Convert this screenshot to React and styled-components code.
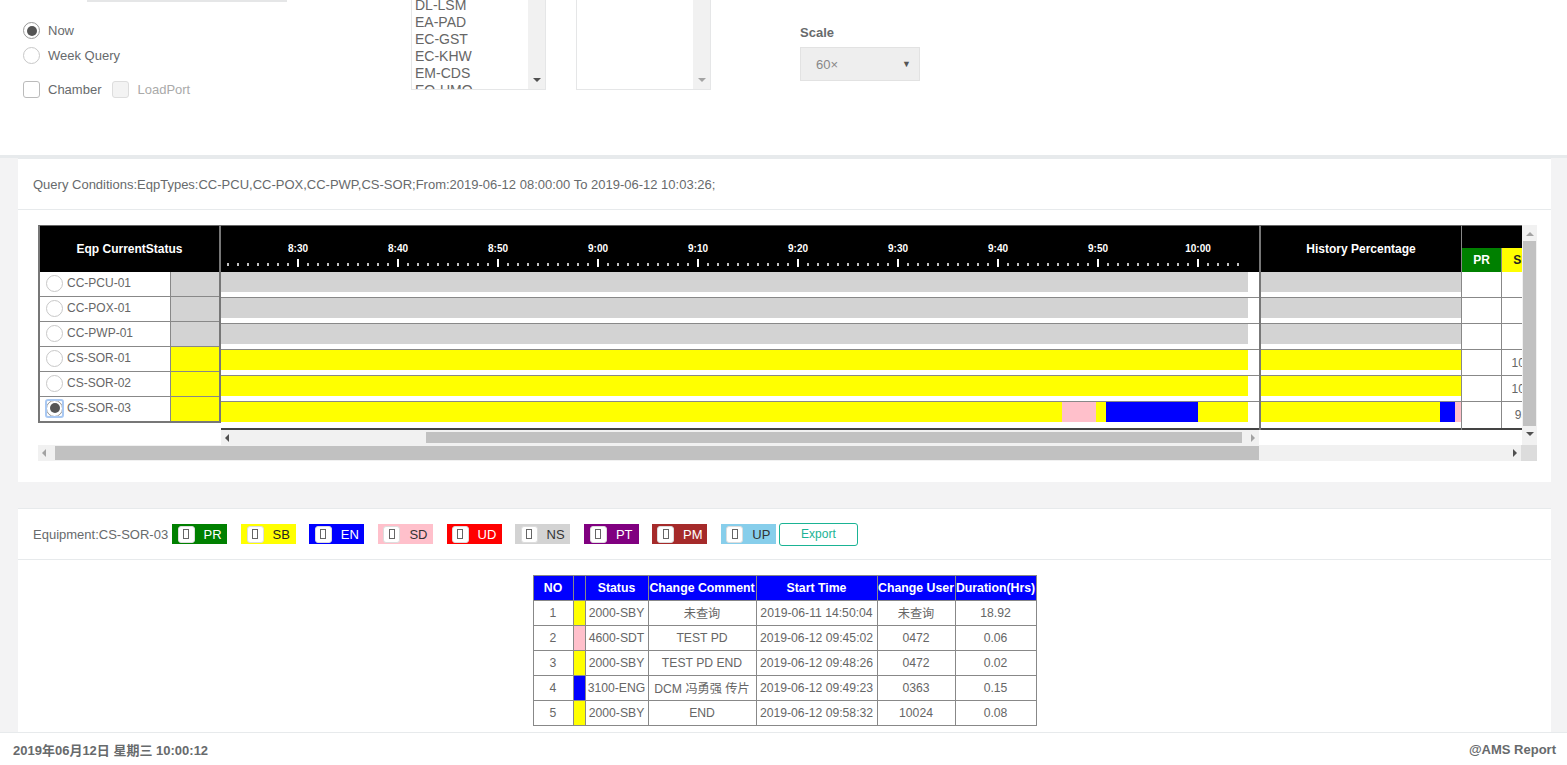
import React from 'react';
import styled, { createGlobalStyle } from 'styled-components';

const GlobalStyle = createGlobalStyle`
  html, body { margin: 0; padding: 0; }
  body {
    font-family: "Liberation Sans", Arial, "Noto Sans CJK SC", sans-serif;
    color: #676a6c;
    background: #f3f3f4;
  }
  * { box-sizing: border-box; }
`;

const Page = styled.div`
  width: 1567px;
  height: 765px;
  overflow: hidden;
  display: flex;
  flex-direction: column;
  background: #f3f3f4;
`;

/* ---------- top filter panel ---------- */

const TopPanel = styled.div`
  height: 158px;
  flex: none;
  background: #fff;
  border-bottom: 3px solid #e7eaec;
  display: flex;
  align-items: flex-start;
`;

const LeftCol = styled.div`
  width: 411px;
  flex: none;
`;

const InputStub = styled.div`
  margin-left: 87px;
  width: 200px;
  height: 2px;
  background: #e5e6e7;
`;

const OptionGroup = styled.div`
  padding-left: 23px;
  padding-top: 16px;
`;

const OptionRow = styled.label`
  display: flex;
  align-items: center;
  gap: 8px;
  height: 25px;
  font-size: 13px;
  color: ${p => (p.$disabled ? '#aaa' : '#676a6c')};
`;

const CheckRow = styled.div`
  display: flex;
  align-items: center;
  margin-top: 13px;
  height: 17px;
`;

const Radio = styled.span`
  position: relative;
  width: 17px;
  height: 17px;
  flex: none;
  border-radius: 50%;
  border: 1px solid ${p => (p.$checked ? '#999' : '#c8c8c8')};
  background: #fff;
  display: inline-flex;
  align-items: center;
  justify-content: center;

  &::before {
    content: '';
    width: 10px;
    height: 10px;
    border-radius: 50%;
    background: ${p => (p.$checked ? '#555' : 'transparent')};
  }

  ${p => p.$focus && `
    &::after {
      content: '';
      position: absolute;
      inset: -2px;
      border: 2px solid #a9c8f2;
      border-radius: 3px;
    }
  `}
`;

const Check = styled.span`
  width: 17px;
  height: 17px;
  flex: none;
  border-radius: 3px;
  border: 1px solid ${p => (p.$disabled ? '#ddd' : '#bbb')};
  background: ${p => (p.$disabled ? '#f3f3f3' : '#fff')};
`;

const CheckLabel = styled.span`
  font-size: 13px;
  margin-left: 8px;
  margin-right: 11px;
  color: ${p => (p.$disabled ? '#aaa' : '#676a6c')};
`;

const ListBox = styled.div`
  width: 135px;
  height: 90px;
  flex: none;
  margin-left: ${p => p.$ml || 0}px;
  border: 1px solid #e5e6e7;
  border-top: none;
  display: flex;
  overflow: hidden;
`;

const ListItems = styled.div`
  flex: 1;
  padding-left: 3px;
  margin-top: -3px;
`;

const ListItem = styled.div`
  font-size: 14px;
  line-height: 17px;
  color: #666;
  white-space: nowrap;
`;

const ListScroll = styled.div`
  width: 17px;
  flex: none;
  background: #f1f1f1;
  display: flex;
  flex-direction: column;
  justify-content: flex-end;
  align-items: center;
  padding-bottom: 7px;
`;

const Arrow = styled.span`
  width: 0;
  height: 0;
  border: 4px solid transparent;
  ${p => p.$dir === 'down' && `border-top-color: ${p.$light ? '#a3a3a3' : '#505050'}; border-bottom-width: 0;`}
  ${p => p.$dir === 'up' && `border-bottom-color: ${p.$light ? '#a3a3a3' : '#505050'}; border-top-width: 0;`}
  ${p => p.$dir === 'left' && `border-right-color: ${p.$light ? '#a3a3a3' : '#505050'}; border-left-width: 0;`}
  ${p => p.$dir === 'right' && `border-left-color: ${p.$light ? '#a3a3a3' : '#505050'}; border-right-width: 0;`}
`;

const ScaleCol = styled.div`
  margin-left: 89px;
  padding-top: 25px;
`;

const ScaleLabel = styled.div`
  font-size: 13px;
  font-weight: bold;
  line-height: 16px;
  color: #676a6c;
`;

const SelectBox = styled.div`
  margin-top: 6px;
  width: 120px;
  height: 34px;
  background: #eee;
  border: 1px solid #e2e2e2;
  display: flex;
  align-items: center;
  justify-content: space-between;
  padding: 0 8px 0 15px;
  font-size: 13px;
  color: #888;

  span { font-size: 9px; color: #555; }
`;

/* ---------- cards ---------- */

const Main = styled.div`
  flex: 1;
  display: flex;
  flex-direction: column;
`;

const Card = styled.section`
  background: #fff;
  border-top: 1px solid #e7eaec;
  margin: ${p => p.$top || 0}px 16px 0 18px;
`;

const CardHead = styled.div`
  height: ${p => p.$h}px;
  border-bottom: 1px solid #e7eaec;
  display: flex;
  align-items: center;
  padding: 0 15px;
  font-size: 13px;
  color: #676a6c;
`;

const CardBody = styled.div`
  padding: 15px ${p => (p.$center ? 17 : 14)}px ${p => p.$pb}px ${p => (p.$center ? 17 : 20)}px;
  ${p => p.$center && 'display: flex; justify-content: center;'}
`;

/* ---------- gantt chart ---------- */

const Chart = styled.div`
  width: 1499px;
  display: flex;
  flex-direction: column;
`;

const ChartRow = styled.div`
  display: flex;
  height: 220px;
  align-items: flex-start;
`;

const EqpTable = styled.div`
  width: 183px;
  flex: none;
  border: 2px solid #777;
  border-top: 1px solid #666;
`;

const BlackHead = styled.div`
  height: ${p => p.$h || 46}px;
  background: #000;
  color: #fff;
  font-size: 12px;
  font-weight: bold;
  display: flex;
  align-items: center;
  justify-content: center;
`;

const EqpRow = styled.div`
  display: flex;
  height: 25px;
  border-bottom: 1px solid #888;
  &:last-child { height: 24px; border-bottom: none; }
`;

const EqpName = styled.div`
  width: 130px;
  flex: none;
  display: flex;
  align-items: center;
  gap: 4px;
  padding-left: 6px;
  padding-bottom: 2px;
  font-size: 12px;
  color: #666;
`;

const EqpStatus = styled.div`
  flex: 1;
  border-left: 1px solid #888;
  background: ${p => p.$bg};
`;

const TimePane = styled.div`
  width: ${p => p.$w}px;
  flex: none;
  border-top: 1px solid #666;
  ${p => p.$bl && 'border-left: 2px solid #777;'}
`;

const Rows = styled.div`
  border-bottom: 2px solid #444;
`;

const BarRow = styled.div`
  height: 26px;
  border-bottom: 1px solid #888;
  padding-right: ${p => p.$pr || 0}px;
  &:last-child { border-bottom: none; }
`;

const Bar = styled.div`
  height: 20px;
  display: flex;
`;

const Seg = styled.div`
  height: 100%;
  flex: none;
  background: ${p => p.$c};
`;

const HScroll = styled.div`
  height: ${p => p.$h}px;
  width: ${p => p.$w}px;
  background: #f1f1f1;
  display: flex;
  align-items: center;
  padding: 0 4px;
`;

const Thumb = styled.div`
  height: ${p => p.$h}px;
  background: #c1c1c1;
  margin-left: ${p => p.$ml}px;
  width: ${p => p.$w}px;
  flex: none;
`;

const Spacer = styled.div`
  flex: 1;
`;

const PctPane = styled.div`
  width: 61px;
  flex: none;
  overflow: hidden;
  border-top: 1px solid #666;
  border-left: 1px solid #888;
`;

const PctInner = styled.div`
  width: 160px;
`;

const PctHeadRow = styled.div`
  display: flex;
  height: 24px;
`;

const PctHead = styled.div`
  width: 40px;
  flex: none;
  background: ${p => p.$bg};
  color: ${p => p.$fg};
  border-right: 1px solid #888;
  font-size: 12px;
  font-weight: bold;
  display: flex;
  align-items: center;
  justify-content: center;
`;

const PctRow = styled.div`
  display: flex;
  height: 26px;
  border-bottom: 1px solid #888;
  &:last-child { border-bottom: none; }
`;

const PctCell = styled.div`
  width: 40px;
  flex: none;
  border-right: 1px solid #888;
  font-size: 12px;
  color: #666;
  display: flex;
  align-items: center;
  justify-content: center;
`;

const VScroll = styled.div`
  width: 15px;
  height: 220px;
  flex: none;
  background: #f1f1f1;
  display: flex;
  flex-direction: column;
  align-items: center;
  padding: 7px 0 6px;
`;

const VThumb = styled.div`
  width: 13px;
  height: 185px;
  background: #c1c1c1;
  margin: 5px 0 6px;
`;

const Corner = styled.div`
  width: 16px;
  height: 16px;
  background: #dcdcdc;
`;

const ScrollRow = styled.div`
  display: flex;
`;

/* ---------- detail section ---------- */

const Equip = styled.span`
  font-size: 13px;
  color: #676a6c;
  margin-right: 4px;
`;

const Legend = styled.div`
  display: flex;
  gap: 13.6px;
`;

const Chip = styled.div`
  width: 55px;
  height: 20px;
  background: ${p => p.$bg};
  color: ${p => p.$fg};
  display: flex;
  align-items: center;
  justify-content: center;
  gap: 9px;
  font-size: 13px;
`;

const ChipBox = styled.span`
  width: 17px;
  height: 17px;
  background: #fff;
  border: 1px solid #ddd;
  border-radius: 3px;
  display: inline-flex;
  align-items: center;
  justify-content: center;

  &::before {
    content: '';
    width: 4px;
    height: 8px;
    border: 1px solid #666;
  }
`;

const ExportBtn = styled.button`
  margin-left: 3px;
  width: 79px;
  height: 23px;
  border: 1px solid #1ab394;
  border-radius: 3px;
  background: #fff;
  color: #1ab394;
  font-family: inherit;
  font-size: 12px;
  padding: 0;
`;

const Table = styled.table`
  border-collapse: collapse;
  table-layout: fixed;
  width: 503px;
  border: 1px solid #333;
`;

const Th = styled.th`
  width: ${p => p.$w}px;
  height: 25px;
  padding: 0;
  background: #0000ff;
  color: #fff;
  font-size: 12.3px;
  font-weight: bold;
  border: 1px solid #888;
  white-space: nowrap;
  overflow: hidden;
`;

const Td = styled.td`
  height: 25px;
  padding: 0;
  text-align: center;
  font-size: 12.2px;
  color: #666;
  border: 1px solid #888;
  white-space: nowrap;
  overflow: hidden;
  background: ${p => p.$bg || '#fff'};
`;

const Footer = styled.footer`
  height: 33px;
  flex: none;
  background: #fff;
  border-top: 1px solid #e7eaec;
  display: flex;
  align-items: center;
  justify-content: space-between;
  padding: 0 11px 0 13px;
  font-size: 13px;
  font-weight: bold;
  color: #676a6c;
`;

/* ---------- data ---------- */

const GRAY = '#d3d3d3';
const YEL = '#ffff00';
const PINK = '#ffc0cb';
const BLUE = '#0000ff';

const EQPS = [
  { name: 'CC-PCU-01', c: GRAY },
  { name: 'CC-POX-01', c: GRAY },
  { name: 'CC-PWP-01', c: GRAY },
  { name: 'CS-SOR-01', c: YEL },
  { name: 'CS-SOR-02', c: YEL },
  { name: 'CS-SOR-03', c: YEL, sel: true },
];

const TIMELINE = [
  [[GRAY, 1027]],
  [[GRAY, 1027]],
  [[GRAY, 1027]],
  [[YEL, 1027]],
  [[YEL, 1027]],
  [[YEL, 840.5], [PINK, 34.5], [YEL, 9.5], [BLUE, 92.5], [YEL, 50]],
];

const HISTORY = [
  [[GRAY, 200]],
  [[GRAY, 200]],
  [[GRAY, 200]],
  [[YEL, 200]],
  [[YEL, 200]],
  [[YEL, 179], [BLUE, 15], [PINK, 6]],
];

const PCT = ['', '', '', '100', '100', '93'];

const TIMES = ['8:30', '8:40', '8:50', '9:00', '9:10', '9:20', '9:30', '9:40', '9:50', '10:00'];

const LEGEND = [
  ['PR', '#008000', '#fff'],
  ['SB', '#ffff00', '#222'],
  ['EN', '#0000ff', '#fff'],
  ['SD', '#ffc0cb', '#333'],
  ['UD', '#ff0000', '#fff'],
  ['NS', '#d3d3d3', '#333'],
  ['PT', '#800080', '#fff'],
  ['PM', '#a52a2a', '#fff'],
  ['UP', '#87ceeb', '#333'],
];

const HISTORY_ROWS = [
  ['1', YEL, '2000-SBY', '未查询', '2019-06-11 14:50:04', '未查询', '18.92'],
  ['2', PINK, '4600-SDT', 'TEST PD', '2019-06-12 09:45:02', '0472', '0.06'],
  ['3', YEL, '2000-SBY', 'TEST PD END', '2019-06-12 09:48:26', '0472', '0.02'],
  ['4', BLUE, '3100-ENG', 'DCM 冯勇强 传片', '2019-06-12 09:49:23', '0363', '0.15'],
  ['5', YEL, '2000-SBY', 'END', '2019-06-12 09:58:32', '10024', '0.08'],
];

function Ruler() {
  const marks = [];
  for (let x = 7; x <= 1017; x += 10) {
    const big = x >= 77 && (x - 77) % 100 === 0;
    marks.push(
      big
        ? <rect key={x} x={x - 1} y={33} width={2} height={8} fill="#fff" />
        : <rect key={x} x={x - 0.75} y={37} width={1.5} height={3} fill="#fff" />
    );
  }
  return (
    <svg width="1038" height="46" style={{ display: 'block', background: '#000' }}>
      {TIMES.map((t, i) => (
        <text key={t} x={77 + i * 100} y={26} textAnchor="middle" fill="#fff" fontSize="10"
          fontWeight="bold" fontFamily='"Liberation Sans", Arial, sans-serif'>{t}</text>
      ))}
      {marks}
    </svg>
  );
}

function Bars({ rows, pr }) {
  return (
    <Rows>
      {rows.map((segs, i) => (
        <BarRow key={i} $pr={pr}>
          <Bar>
            {segs.map(([c, w], j) => <Seg key={j} $c={c} style={{ width: w }} />)}
          </Bar>
        </BarRow>
      ))}
    </Rows>
  );
}

export default function App() {
  return (
    <Page>
      <GlobalStyle />
      <TopPanel>
        <LeftCol>
          <InputStub />
          <OptionGroup>
            <OptionRow><Radio $checked /> Now</OptionRow>
            <OptionRow><Radio /> Week Query</OptionRow>
            <CheckRow>
              <Check /><CheckLabel>Chamber</CheckLabel>
              <Check $disabled /><CheckLabel $disabled>LoadPort</CheckLabel>
            </CheckRow>
          </OptionGroup>
        </LeftCol>
        <ListBox>
          <ListItems>
            {['DL-LSM', 'EA-PAD', 'EC-GST', 'EC-KHW', 'EM-CDS', 'EQ-UMO'].map(t => <ListItem key={t}>{t}</ListItem>)}
          </ListItems>
          <ListScroll><Arrow $dir="down" /></ListScroll>
        </ListBox>
        <ListBox $ml={30}>
          <ListItems />
          <ListScroll><Arrow $dir="down" $light /></ListScroll>
        </ListBox>
        <ScaleCol>
          <ScaleLabel>Scale</ScaleLabel>
          <SelectBox>60×<span>▼</span></SelectBox>
        </ScaleCol>
      </TopPanel>

      <Main>
        <Card>
          <CardHead $h={51}>
            Query Conditions:EqpTypes:CC-PCU,CC-POX,CC-PWP,CS-SOR;From:2019-06-12 08:00:00 To 2019-06-12 10:03:26;
          </CardHead>
          <CardBody $pb={21}>
            <Chart>
              <ChartRow>
                <EqpTable>
                  <BlackHead>Eqp CurrentStatus</BlackHead>
                  {EQPS.map(e => (
                    <EqpRow key={e.name}>
                      <EqpName><Radio $checked={e.sel} $focus={e.sel} />{e.name}</EqpName>
                      <EqpStatus $bg={e.c} />
                    </EqpRow>
                  ))}
                </EqpTable>

                <TimePane $w={1038}>
                  <Ruler />
                  <Bars rows={TIMELINE} pr={11} />
                  <HScroll $h={15} $w={1038}>
                    <Arrow $dir="left" />
                    <Thumb $h={11} $ml={197} $w={816} />
                    <Spacer />
                    <Arrow $dir="right" $light />
                  </HScroll>
                </TimePane>

                <TimePane $w={202} $bl>
                  <BlackHead>History Percentage</BlackHead>
                  <Bars rows={HISTORY} />
                </TimePane>

                <PctPane>
                  <PctInner>
                    <BlackHead $h={22} />
                    <PctHeadRow>
                      <PctHead $bg="#008000" $fg="#fff">PR</PctHead>
                      <PctHead $bg="#ffff00" $fg="#222">SB</PctHead>
                      <PctHead $bg="#0000ff" $fg="#fff">EN</PctHead>
                    </PctHeadRow>
                    <Rows>
                      {PCT.map((v, i) => (
                        <PctRow key={i}>
                          <PctCell />
                          <PctCell>{v}</PctCell>
                          <PctCell />
                        </PctRow>
                      ))}
                    </Rows>
                  </PctInner>
                </PctPane>

                <VScroll>
                  <Arrow $dir="up" $light />
                  <VThumb />
                  <Arrow $dir="down" />
                </VScroll>
              </ChartRow>
              <ScrollRow>
                <HScroll $h={16} $w={1483}>
                  <Arrow $dir="left" $light />
                  <Thumb $h={14} $ml={9} $w={1204} />
                  <Spacer />
                  <Arrow $dir="right" />
                </HScroll>
                <Corner />
              </ScrollRow>
            </Chart>
          </CardBody>
        </Card>

        <Card $top={26}>
          <CardHead $h={51}>
            <Equip>Equipment:CS-SOR-03</Equip>
            <Legend>
              {LEGEND.map(([t, bg, fg]) => (
                <Chip key={t} $bg={bg} $fg={fg}><ChipBox />{t}</Chip>
              ))}
            </Legend>
            <ExportBtn>Export</ExportBtn>
          </CardHead>
          <CardBody $pb={6} $center>
            <Table>
              <thead>
                <tr>
                  <Th $w={40}>NO</Th>
                  <Th $w={12} />
                  <Th $w={63}>Status</Th>
                  <Th $w={108}>Change Comment</Th>
                  <Th $w={121}>Start Time</Th>
                  <Th $w={78}>Change User</Th>
                  <Th $w={81}>Duration(Hrs)</Th>
                </tr>
              </thead>
              <tbody>
                {HISTORY_ROWS.map(([no, c, st, cm, tm, us, du]) => (
                  <tr key={no}>
                    <Td>{no}</Td>
                    <Td $bg={c} />
                    <Td>{st}</Td>
                    <Td>{cm}</Td>
                    <Td>{tm}</Td>
                    <Td>{us}</Td>
                    <Td>{du}</Td>
                  </tr>
                ))}
              </tbody>
            </Table>
          </CardBody>
        </Card>
      </Main>

      <Footer>
        <span>2019年06月12日 星期三 10:00:12</span>
        <span>@AMS Report</span>
      </Footer>
    </Page>
  );
}
